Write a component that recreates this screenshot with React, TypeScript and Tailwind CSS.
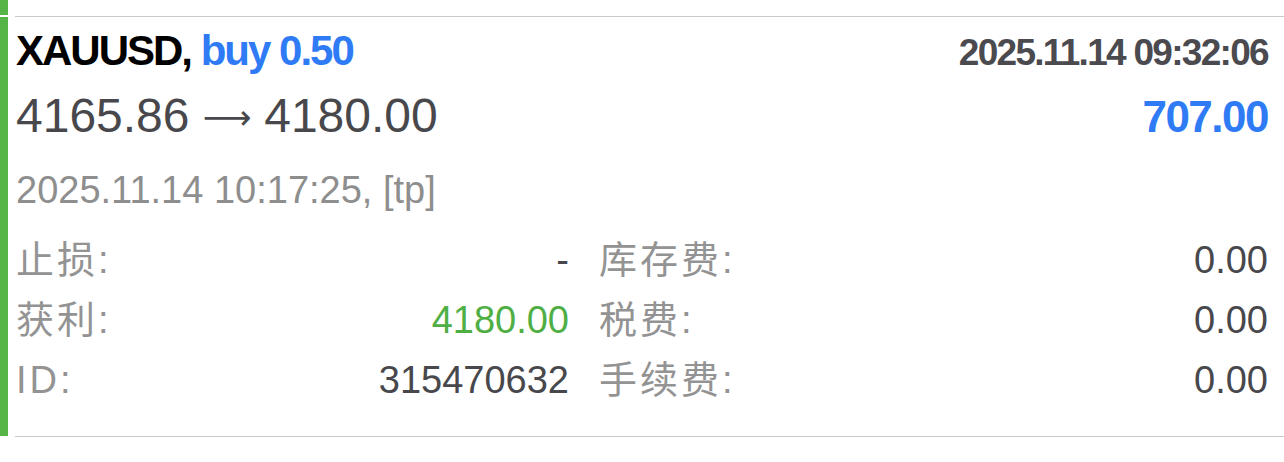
const font = { fontFamily: '"Liberation Sans", "Noto Sans CJK SC", sans-serif' };

type Field = { label: string; value: string; tone?: 'green' };

const leftFields: Field[] = [
  { label: '止损:', value: '-' },
  { label: '获利:', value: '4180.00', tone: 'green' },
  { label: 'ID:', value: '315470632' },
];

const rightFields: Field[] = [
  { label: '库存费:', value: '0.00' },
  { label: '税费:', value: '0.00' },
  { label: '手续费:', value: '0.00' },
];

function FieldRow({ field }: { field: Field }) {
  return (
    <div className="flex justify-between text-[38px] leading-[60px]">
      <span className="tracking-[3px] text-[#939393]">{field.label}</span>
      <span className={field.tone === 'green' ? 'text-[#4fae44]' : 'text-[#48484c]'}>{field.value}</span>
    </div>
  );
}

function Separator() {
  return <div className="ml-[15px] h-px bg-[#c9c9cc]" />;
}

export default function App() {
  return (
    <div className="w-[1284px] h-[462px] overflow-hidden bg-white" style={font}>
      {/* tail of the previous deal */}
      <div className="h-[15px] w-[8px] bg-[#56b546]" />
      <div className="h-px" />
      <Separator />

      {/* deal */}
      <div className="flex">
        <div className="w-[8px] shrink-0 bg-[#56b546]" />
        <div className="flex-1 pl-[8px] pr-[16px] pt-[10px] pb-[26px]">
          <div className="flex items-baseline justify-between">
            <div className="text-[42px] leading-[48px] font-bold tracking-[-2px] text-black">
              XAUUSD, <span className="text-[#2f7bf5]">buy 0.50</span>
            </div>
            <div className="text-[37px] leading-[48px] font-bold tracking-[-1.7px] text-[#4a4a4f]">
              2025.11.14 09:32:06
            </div>
          </div>

          <div className="mt-[11px] flex items-baseline justify-between">
            <div className="text-[48px] leading-[56px] text-[#48484c]">
              4165.86{' '}
              <span className="inline-block w-[48px] text-center align-[3px] text-[34px] font-['DejaVu_Sans']">⟶</span>{' '}
              4180.00
            </div>
            <div className="text-[44px] leading-[56px] font-bold tracking-[-1.5px] text-[#2f7bf5]">707.00</div>
          </div>

          <div className="mt-[23px] text-[38px] leading-[44px] text-[#8e8e8e]">2025.11.14 10:17:25, [tp]</div>

          <div className="mt-[18px] flex gap-[30px]">
            <div className="w-[553px]">
              {leftFields.map((f) => (
                <FieldRow key={f.label} field={f} />
              ))}
            </div>
            <div className="flex-1">
              {rightFields.map((f) => (
                <FieldRow key={f.label} field={f} />
              ))}
            </div>
          </div>
        </div>
      </div>
      <Separator />
    </div>
  );
}
